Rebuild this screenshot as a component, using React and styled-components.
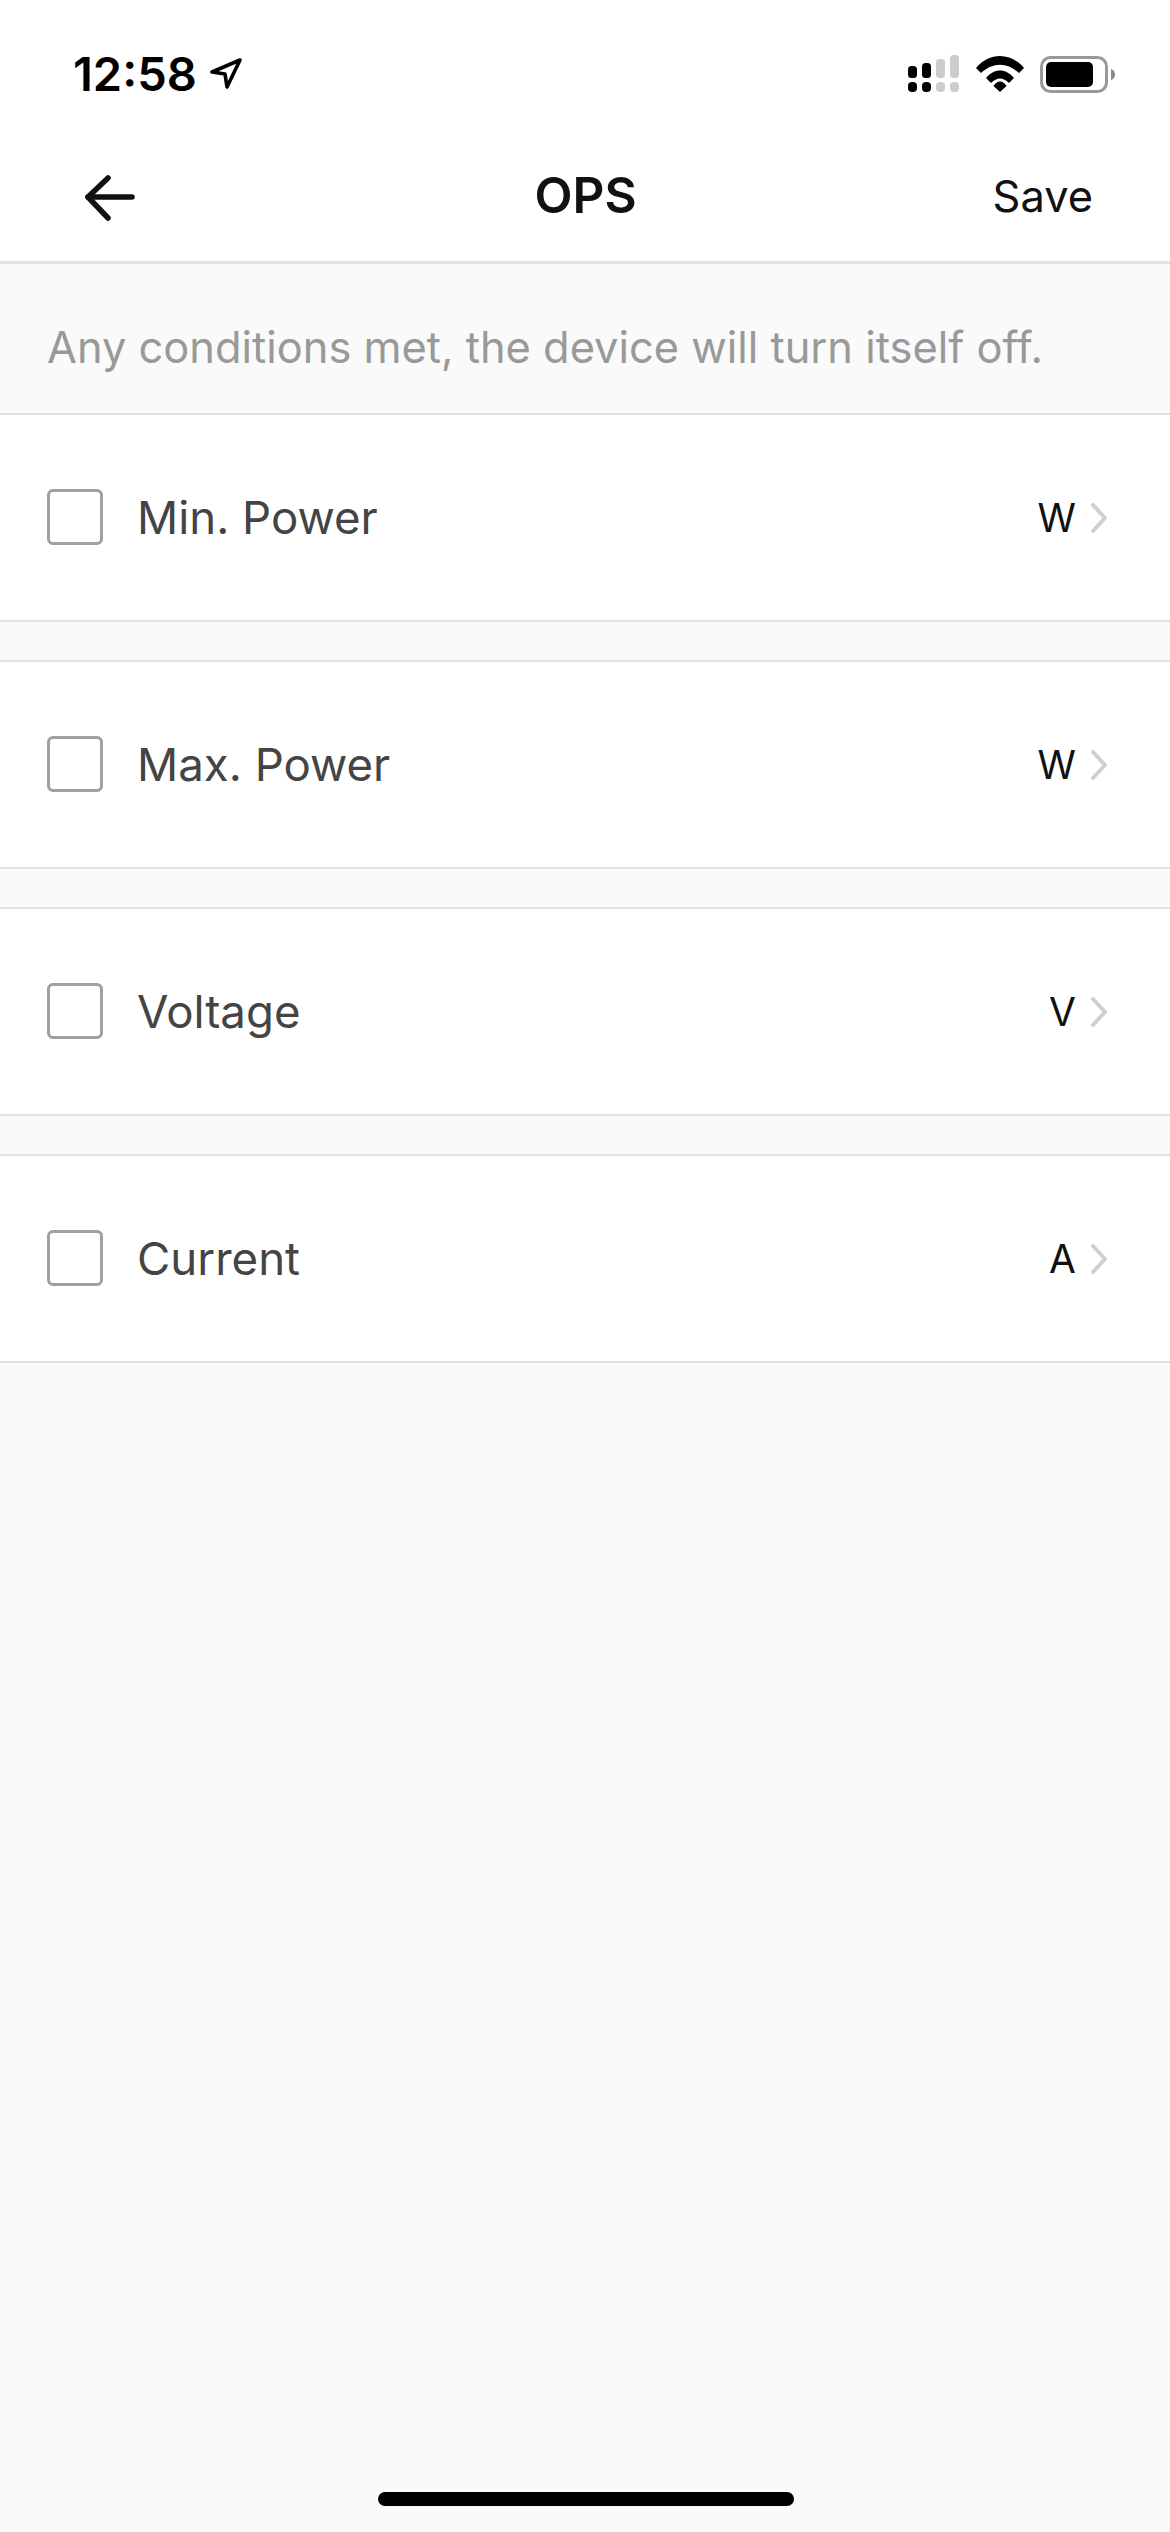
import React from 'react';
import styled, { createGlobalStyle } from 'styled-components';

const Global = createGlobalStyle`
  html, body { margin: 0; padding: 0; background: #fafafa; }
  body { font-family: Inter, "Liberation Sans", sans-serif; }
  * { box-sizing: border-box; }
`;

const Page = styled.div`
  width: 1170px;
  height: 2532px;
  background: #fafafa;
  display: flex;
  flex-direction: column;
  overflow: hidden;
`;

const StatusBar = styled.div`
  height: 132px;
  background: #fff;
  display: flex;
  justify-content: space-between;
  align-items: flex-start;
  padding: 55px 54px 0 73px;
`;

const TimeGroup = styled.div`
  display: flex;
  align-items: center;
  gap: 13px;
`;

const Time = styled.span`
  font-size: 47px;
  line-height: 37px;
  font-weight: 600;
  color: #000;
`;

const StatusIcons = styled.div`
  display: flex;
  align-items: center;
  gap: 16px;
`;

const Nav = styled.header`
  height: 132px;
  background: #fff;
  border-bottom: 3px solid #e2e2e2;
  display: grid;
  grid-template-columns: 1fr auto 1fr;
  align-items: center;
  padding: 0 77px 3px 85px;
`;

const BackLink = styled.span`
  display: flex;
  margin-top: 5px;
`;

const Title = styled.h1`
  margin: 0 0 0 -7px;
  font-size: 49.5px;
  font-weight: 600;
  color: #111;
`;

const Save = styled.span`
  justify-self: end;
  margin-top: 2px;
  font-size: 43.4px;
  color: #111;
`;

const Hint = styled.div`
  height: 149px;
  display: flex;
  align-items: center;
  padding: 16px 0 0 47px;
  font-size: 43.4px;
  color: #999;
  background: #fafafa;
`;

const List = styled.div`
  display: flex;
  flex-direction: column;
  gap: 38px;
`;

const Row = styled.div`
  height: 209px;
  background: #fff;
  border-top: 2px solid #e2e2e2;
  border-bottom: 2px solid #e2e2e2;
  display: flex;
  align-items: center;
  padding: 0 62px 0 47px;
`;

const Check = styled.span`
  width: 56px;
  height: 56px;
  margin-bottom: 2px;
  border: 3px solid #a0a0a0;
  border-radius: 6px;
  background: #fff;
  flex: none;
`;

const Label = styled.span`
  margin-left: 34px;
  flex: 1;
  font-size: 45.6px;
  color: #444;
`;

const Unit = styled.span`
  font-size: 39px;
  color: #111;
  margin-right: 14px;
`;

const HomeBar = styled.div`
  width: 416px;
  height: 14px;
  border-radius: 7px;
  background: #000;
  margin: auto 0 26px 378px;
`;

const rows = [
  { label: 'Min. Power', unit: 'W' },
  { label: 'Max. Power', unit: 'W' },
  { label: 'Voltage', unit: 'V' },
  { label: 'Current', unit: 'A' },
];

const LocationIcon = () => (
  <svg width="32" height="32" viewBox="0 0 32 32" fill="none">
    <path d="M2 14 L30 2 L17 29 L15 16 Z" stroke="#000" strokeWidth="3.6" strokeLinejoin="round" />
  </svg>
);

const SignalIcon = () => (
  <svg width="52" height="38" viewBox="0 0 52 38">
    <rect x="0" y="11" width="9" height="12" rx="3.5" fill="#000" />
    <rect x="14" y="8" width="9" height="15" rx="3.5" fill="#000" />
    <rect x="28" y="4" width="9" height="19" rx="3.5" fill="#ccc" />
    <rect x="42" y="0" width="9" height="23" rx="3.5" fill="#ccc" />
    <rect x="0" y="27" width="9" height="10" rx="4" fill="#000" />
    <rect x="14" y="27" width="9" height="10" rx="4" fill="#000" />
    <rect x="28" y="27" width="9" height="10" rx="4" fill="#ccc" />
    <rect x="42" y="27" width="9" height="10" rx="4" fill="#ccc" />
  </svg>
);

const WifiIcon = () => (
  <svg width="48" height="36" viewBox="0 0 48 36">
    <path d="M0 12 C13 -4 35 -4 48 12 L43 17 C31 6 17 6 5 17 Z" fill="#000" />
    <path d="M10 22 C18 12 30 12 38 22 L33 27 C27 21 21 21 15 27 Z" fill="#000" />
    <path d="M17.500 30 C21 24 27 24 30.500 30 L24 36 Z" fill="#000" />
  </svg>
);

const BatteryIcon = () => (
  <svg width="76" height="37" viewBox="0 0 76 37">
    <rect x="1.500" y="1.500" width="65" height="34" rx="9" fill="none" stroke="#999" strokeWidth="3" />
    <rect x="6" y="6" width="47" height="25" rx="5" fill="#000" />
    <path d="M71 13 C74 14 75 16 75 18.500 C75 21 74 23 71 24 Z" fill="#888" />
  </svg>
);

const BackIcon = () => (
  <svg width="50" height="46" viewBox="0 0 50 46" fill="none" stroke="#111" strokeWidth="5.500" strokeLinecap="round" strokeLinejoin="round">
    <path d="M47 22 H3" />
    <path d="M23 3 L3 22 L23 43" />
  </svg>
);

const Chevron = () => (
  <svg width="18" height="30" viewBox="0 0 18 30" fill="none" stroke="#d0d0d0" strokeWidth="4" strokeLinecap="round" strokeLinejoin="round">
    <path d="M3 2 L15 15 L3 28" />
  </svg>
);

export default function App() {
  return (
    <Page>
      <Global />
      <StatusBar>
        <TimeGroup>
          <Time>12:58</Time>
          <LocationIcon />
        </TimeGroup>
        <StatusIcons>
          <SignalIcon />
          <WifiIcon />
          <BatteryIcon />
        </StatusIcons>
      </StatusBar>
      <Nav>
        <BackLink>
          <BackIcon />
        </BackLink>
        <Title>OPS</Title>
        <Save>Save</Save>
      </Nav>
      <Hint>Any conditions met, the device will turn itself off.</Hint>
      <List>
        {rows.map((r) => (
          <Row key={r.label}>
            <Check />
            <Label>{r.label}</Label>
            <Unit>{r.unit}</Unit>
            <Chevron />
          </Row>
        ))}
      </List>
      <HomeBar />
    </Page>
  );
}
